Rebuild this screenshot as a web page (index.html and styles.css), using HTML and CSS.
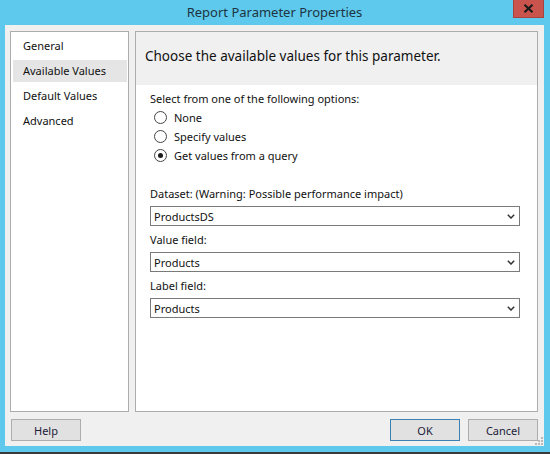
FILE: index.html
```html
<!DOCTYPE html>
<html lang="en">
<head>
    <meta charset="UTF-8">
    <title>Report Parameter Properties</title>
    <link rel="stylesheet" href="styles.css">
</head>
<body>
    <div class="window">
        <div class="titlebar">
            <span class="title">Report Parameter Properties</span>
            <div class="close">
                <svg width="11" height="9" viewBox="0 0 11 9">
                    <path d="M1.5 0.8 L9.5 8.2 M9.5 0.8 L1.5 8.2" stroke="#1a1a1a" stroke-width="2.2"/>
                </svg>
            </div>
        </div>

        <div class="client">
            <div class="main">
                <ul class="nav">
                    <li>General</li>
                    <li class="active">Available Values</li>
                    <li>Default Values</li>
                    <li>Advanced</li>
                </ul>

                <div class="panel">
                    <div class="panel-head">Choose the available values for this parameter.</div>
                    <div class="panel-body">
                        <div class="line">Select from one of the following options:</div>
                        <div class="radios">
                            <div class="radio"><span class="dot"></span>None</div>
                            <div class="radio"><span class="dot"></span>Specify values</div>
                            <div class="radio checked"><span class="dot"></span>Get values from a query</div>
                        </div>

                        <div class="line field-label first">Dataset: (Warning: Possible performance impact)</div>
                        <div class="combo">
                            <span>ProductsDS</span>
                            <svg class="chev" width="8" height="5" viewBox="0 0 8 5"><path d="M0.8 0.8 L4 4 L7.2 0.8" fill="none" stroke="#333" stroke-width="1.5"/></svg>
                        </div>

                        <div class="line field-label">Value field:</div>
                        <div class="combo">
                            <span>Products</span>
                            <svg class="chev" width="8" height="5" viewBox="0 0 8 5"><path d="M0.8 0.8 L4 4 L7.2 0.8" fill="none" stroke="#333" stroke-width="1.5"/></svg>
                        </div>

                        <div class="line field-label">Label field:</div>
                        <div class="combo">
                            <span>Products</span>
                            <svg class="chev" width="8" height="5" viewBox="0 0 8 5"><path d="M0.8 0.8 L4 4 L7.2 0.8" fill="none" stroke="#333" stroke-width="1.5"/></svg>
                        </div>
                    </div>
                </div>
            </div>

            <div class="footer">
                <button class="btn">Help</button>
                <div class="spacer"></div>
                <button class="btn default">OK</button>
                <button class="btn">Cancel</button>
            </div>

            <svg class="grip" width="8" height="8" viewBox="0 0 8 8">
                <rect x="6" y="0" width="2" height="2" fill="#b8b8b8"/>
                <rect x="3" y="3" width="2" height="2" fill="#b8b8b8"/>
                <rect x="6" y="3" width="2" height="2" fill="#b8b8b8"/>
                <rect x="0" y="6" width="2" height="2" fill="#b8b8b8"/>
                <rect x="3" y="6" width="2" height="2" fill="#b8b8b8"/>
                <rect x="6" y="6" width="2" height="2" fill="#b8b8b8"/>
            </svg>
        </div>
    </div>
</body>
</html>
```

FILE: styles.css
```css
body, html {
    margin: 0;
    padding: 0;
    font-family: "Segoe UI", "Noto Sans", sans-serif;
    font-size: 11px;
    color: #111;
}

.window {
    width: 550px;
    height: 454px;
    box-sizing: border-box;
    background-color: #5ec9ec;
    padding: 0 6px 6px 5px;
    border-bottom: 2px solid #3a3a3a;
    display: flex;
    flex-direction: column;
}

.titlebar {
    height: 25px;
    position: relative;
    display: flex;
    align-items: center;
    justify-content: center;
}

.title {
    font-size: 13px;
    color: #1d3442;
    margin-top: -2px;
}

.close {
    position: absolute;
    top: 0;
    right: 0;
    width: 31px;
    height: 18px;
    box-sizing: border-box;
    background-color: #c9534d;
    border: 1px solid #a8433e;
    border-top: none;
    display: flex;
    align-items: center;
    justify-content: center;
}

.client {
    flex: 1;
    background-color: #f0f0f0;
    padding: 6px 6px 5px 5px;
    display: flex;
    flex-direction: column;
    position: relative;
}

.main {
    flex: 1;
    display: flex;
    gap: 6px;
}

.nav {
    width: 119px;
    box-sizing: border-box;
    margin: 0;
    padding: 3px 1px 0 2px;
    list-style: none;
    background-color: #fff;
    border: 1px solid #acacac;
}

.nav li {
    height: 22px;
    line-height: 22px;
    margin-bottom: 3px;
    padding-left: 10px;
}

.nav li.active {
    background-color: #e5e5e5;
}

.panel {
    flex: 1;
    background-color: #fff;
    border: 1px solid #acacac;
    display: flex;
    flex-direction: column;
}

.panel-head {
    height: 53px;
    box-sizing: border-box;
    background-color: #f0f0f0;
    font-size: 13.5px;
    padding: 15px 0 0 9px;
}

.panel-body {
    padding: 6px 17px 0 14px;
}

.line {
    height: 16px;
    line-height: 16px;
}

.radios {
    padding: 1px 0 0 4px;
}

.radio {
    height: 19px;
    display: flex;
    align-items: center;
    gap: 7px;
}

.dot {
    width: 11px;
    height: 11px;
    border: 1px solid #444;
    border-radius: 50%;
    background-color: #fff;
    display: flex;
    align-items: center;
    justify-content: center;
}

.radio.checked .dot::after {
    content: "";
    width: 5px;
    height: 5px;
    border-radius: 50%;
    background-color: #1b1b1b;
}

.field-label {
    margin-top: 6px;
}

.field-label.first {
    margin-top: 21px;
}

.combo {
    height: 20px;
    box-sizing: border-box;
    margin-top: 4px;
    border: 1px solid #7a7a7a;
    background-color: #fff;
    display: flex;
    align-items: center;
    justify-content: space-between;
    padding: 0 4px 0 3px;
}

.footer {
    display: flex;
    gap: 8px;
    margin-top: 7px;
    padding-left: 1px;
}

.spacer {
    flex: 1;
}

.btn {
    width: 70px;
    height: 22px;
    font-family: inherit;
    font-size: 11px;
    color: #1b1b3a;
    background-color: #e1e1e1;
    border: 1px solid #adadad;
    padding: 0;
}

.btn.default {
    border-color: #3c7fb1;
}

.grip {
    position: absolute;
    right: 1px;
    bottom: 1px;
}
```
